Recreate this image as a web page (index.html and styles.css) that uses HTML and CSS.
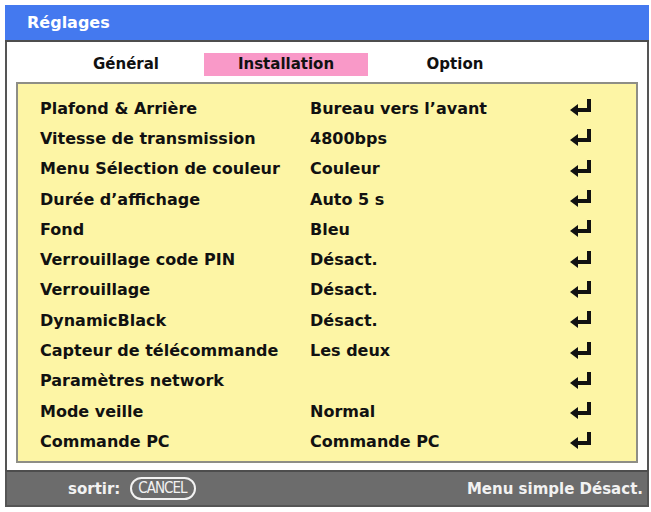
FILE: index.html
```html
<!DOCTYPE html>
<html lang="fr">
<head>
<meta charset="utf-8">
<title>Réglages</title>
<link rel="stylesheet" href="styles.css">
</head>
<body>
<div class="frame">
  <div class="title">Réglages</div>
  <div class="panel">
    <div class="tabs">
      <div class="tab tab-first">Général</div>
      <div class="tab tab-active">Installation</div>
      <div class="tab tab-last">Option</div>
    </div>
    <div class="list">
      <div class="row"><span class="label">Plafond &amp; Arrière</span><span class="value">Bureau vers l’avant</span><svg class="enter" viewBox="0 0 21 17"><path d="M21 0V13H8V17L0 11L8 5V9H17V0Z"/></svg></div>
      <div class="row"><span class="label">Vitesse de transmission</span><span class="value">4800bps</span><svg class="enter" viewBox="0 0 21 17"><path d="M21 0V13H8V17L0 11L8 5V9H17V0Z"/></svg></div>
      <div class="row"><span class="label">Menu Sélection de couleur</span><span class="value">Couleur</span><svg class="enter" viewBox="0 0 21 17"><path d="M21 0V13H8V17L0 11L8 5V9H17V0Z"/></svg></div>
      <div class="row"><span class="label">Durée d’affichage</span><span class="value">Auto 5 s</span><svg class="enter" viewBox="0 0 21 17"><path d="M21 0V13H8V17L0 11L8 5V9H17V0Z"/></svg></div>
      <div class="row"><span class="label">Fond</span><span class="value">Bleu</span><svg class="enter" viewBox="0 0 21 17"><path d="M21 0V13H8V17L0 11L8 5V9H17V0Z"/></svg></div>
      <div class="row"><span class="label">Verrouillage code PIN</span><span class="value">Désact.</span><svg class="enter" viewBox="0 0 21 17"><path d="M21 0V13H8V17L0 11L8 5V9H17V0Z"/></svg></div>
      <div class="row"><span class="label">Verrouillage</span><span class="value">Désact.</span><svg class="enter" viewBox="0 0 21 17"><path d="M21 0V13H8V17L0 11L8 5V9H17V0Z"/></svg></div>
      <div class="row"><span class="label">DynamicBlack</span><span class="value">Désact.</span><svg class="enter" viewBox="0 0 21 17"><path d="M21 0V13H8V17L0 11L8 5V9H17V0Z"/></svg></div>
      <div class="row"><span class="label">Capteur de télécommande</span><span class="value">Les deux</span><svg class="enter" viewBox="0 0 21 17"><path d="M21 0V13H8V17L0 11L8 5V9H17V0Z"/></svg></div>
      <div class="row"><span class="label">Paramètres network</span><span class="value"></span><svg class="enter" viewBox="0 0 21 17"><path d="M21 0V13H8V17L0 11L8 5V9H17V0Z"/></svg></div>
      <div class="row"><span class="label">Mode veille</span><span class="value">Normal</span><svg class="enter" viewBox="0 0 21 17"><path d="M21 0V13H8V17L0 11L8 5V9H17V0Z"/></svg></div>
      <div class="row"><span class="label">Commande PC</span><span class="value">Commande PC</span><svg class="enter" viewBox="0 0 21 17"><path d="M21 0V13H8V17L0 11L8 5V9H17V0Z"/></svg></div>
    </div>
  </div>
  <div class="footer">
    <div class="exit"><span>sortir:</span><span class="cancel">CANCEL</span></div>
    <div class="mode">Menu simple Désact.</div>
  </div>
</div>
</body>
</html>
```

FILE: styles.css
```css
html, body {
  margin: 0;
  padding: 0;
  background: #ffffff;
}

body {
  font-family: "DejaVu Sans", "Noto Sans", sans-serif;
  font-weight: bold;
  color: #111111;
}

.frame {
  width: 644px;
  margin: 5px 0 0 5px;
}

.title {
  height: 35px;
  line-height: 35px;
  padding-left: 22px;
  background: #4479ef;
  color: #ffffff;
  font-size: 16px;
  border-bottom: 2px solid #4d4d4d;
}

.panel {
  background: #ffffff;
  border-left: 2px solid #555555;
  border-right: 2px solid #555555;
  padding: 0 9px 7px 9px;
}

.tabs {
  display: flex;
  height: 40px;
  align-items: center;
  padding-left: 24px;
  font-size: 15px;
}

.tab {
  width: 164px;
  height: 23px;
  line-height: 23px;
  text-align: center;
  margin-top: 5px;
}

.tab-first {
  padding-left: 8px;
  width: 156px;
}

.tab-last {
  padding-left: 10px;
  width: 154px;
}

.tab-active {
  background: #f999c8;
}

.list {
  height: 368px;
  background: #fdf5a5;
  border: 2px solid #8e8e86;
  padding: 9px 0 0 22px;
  font-size: 16px;
}

.row {
  display: flex;
  align-items: center;
  height: 30.3px;
}

.label {
  width: 270px;
  white-space: nowrap;
}

.value {
  width: 260px;
  white-space: nowrap;
}

.enter {
  width: 21px;
  height: 17px;
  fill: #111111;
  margin-top: -1px;
}

.footer {
  height: 33px;
  background: #6c6c6c;
  border: 2px solid #555555;
  border-top: 2px solid #4d4d4d;
  display: flex;
  align-items: center;
  justify-content: space-between;
  color: #f2f2f2;
  font-size: 15px;
}

.exit {
  display: flex;
  align-items: center;
  padding-left: 61px;
  gap: 10px;
}

.cancel {
  font-family: "DejaVu Sans Condensed", "DejaVu Sans", sans-serif;
  font-stretch: condensed;
  font-weight: normal;
  font-size: 15px;
  letter-spacing: -1px;
  border: 2px solid #f2f2f2;
  border-radius: 12px;
  padding: 0 7px 0 6px;
  height: 19px;
  line-height: 19px;
}

.mode {
  padding-right: 4px;
}
```
